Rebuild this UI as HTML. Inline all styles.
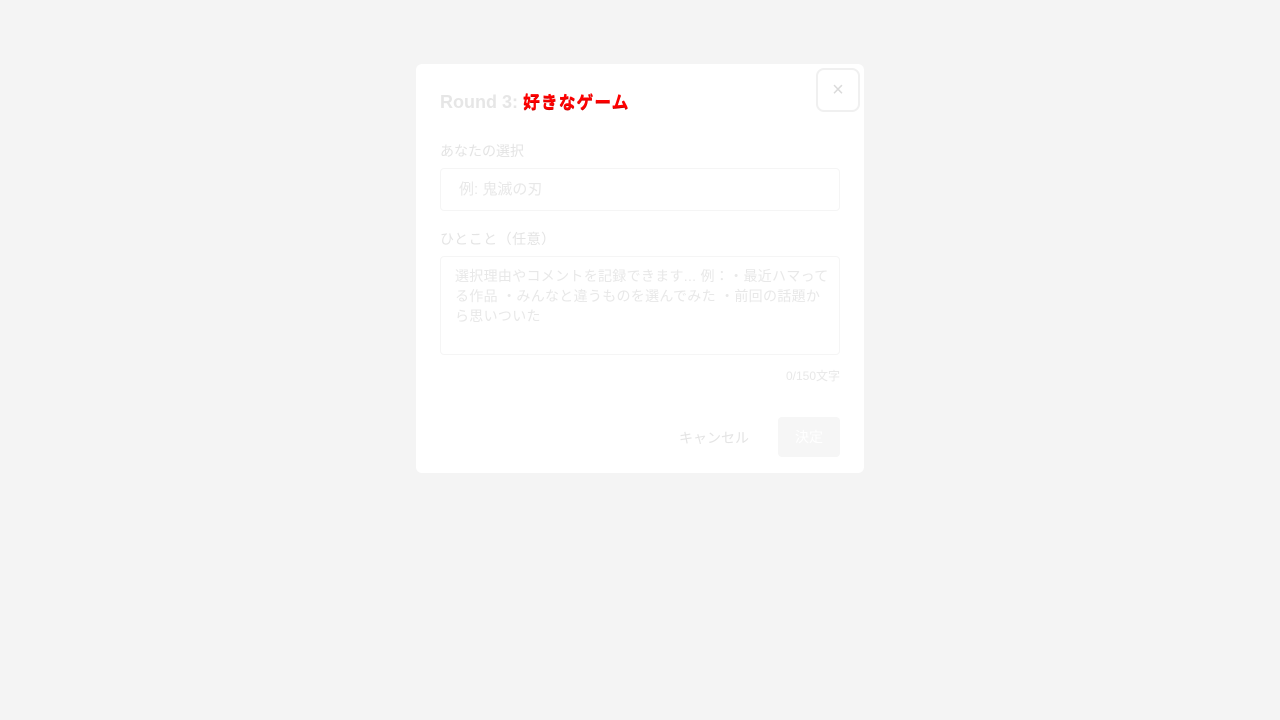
<!DOCTYPE html>
<html><head><meta charset="utf-8"><style>
*{box-sizing:border-box;margin:0;padding:0}
body{width:1280px;height:720px;background:#f4f4f4;font-family:"Liberation Sans","Noto Sans CJK JP",sans-serif;position:relative;overflow:hidden}
.m{position:absolute;left:416px;top:64px;width:448px;height:409px;background:#fff;border-radius:6px}
.x{position:absolute;left:400px;top:4px;width:44px;height:44px;border:2px solid #f0f0f0;border-radius:8px;color:#dadada;font-size:20px;text-align:center;line-height:40px}
h1{position:absolute;left:24px;top:24px;font-size:18px;font-weight:bold;color:#e6e6e6}
h1 span{color:#f00;font-size:17px;letter-spacing:0.8px;text-shadow:0 1px #c00}
.l{position:absolute;left:24px;font-size:14px;color:#e4e4e4}
.i{position:absolute;left:24px;width:400px;border:1px solid #f5f5f5;border-radius:4px;color:#e8e8e8}
.c{position:absolute;right:24px;top:303px;font-size:12px;color:#e8e8e8}
.cn{position:absolute;left:263px;top:364px;font-size:14px;color:#e4e4e4}
.ok{position:absolute;left:362px;top:353px;width:62px;height:40px;background:#f6f6f6;border-radius:4px;color:#fff;font-size:14px;text-align:center;line-height:40px}
</style></head><body>
<div class="m">
<div class="x">×</div>
<h1>Round 3: <span>好きなゲーム</span></h1>
<div class="l" style="top:77px">あなたの選択</div>
<div class="i" style="top:104px;height:43px;padding:0 18px;line-height:41px;font-size:15px">例: 鬼滅の刃</div>
<div class="l" style="top:165px;letter-spacing:0.5px">ひとこと（任意）</div>
<div class="i" style="top:192px;height:99px;padding:9px 6px 9px 14px;font-size:14px;line-height:20px;letter-spacing:0.3px">選択理由やコメントを記録できます... 例：・最近ハマってる作品 ・みんなと違うものを選んでみた ・前回の話題から思いついた</div>
<div class="c">0/150文字</div>
<div class="cn">キャンセル</div>
<div class="ok">決定</div>
</div>
</body></html>
